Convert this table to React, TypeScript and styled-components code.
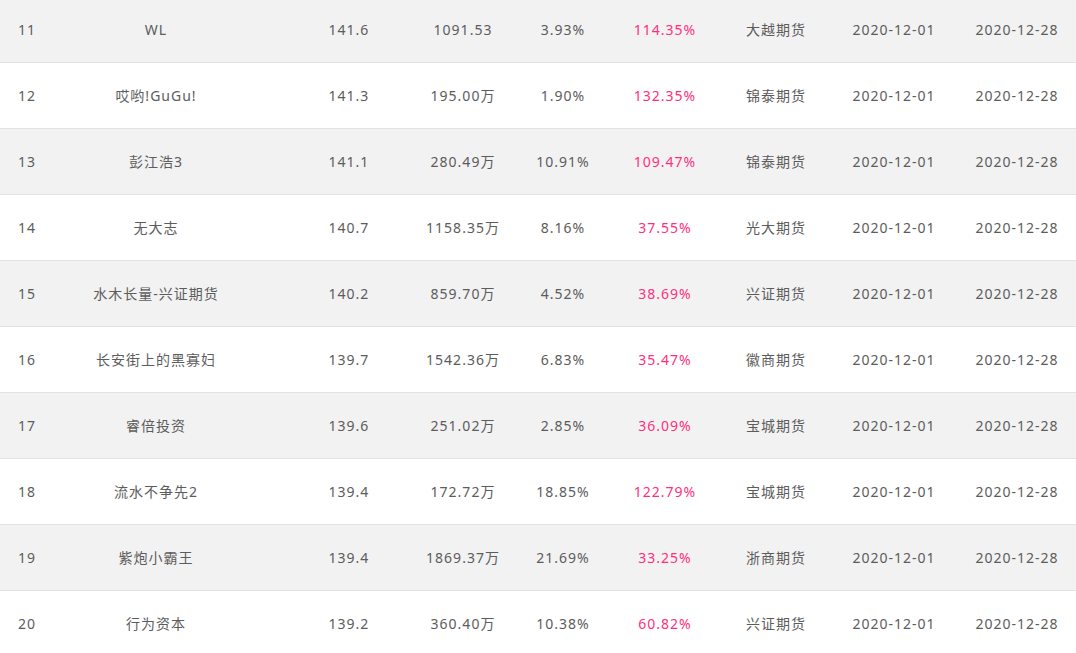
import React from "react";
import styled, { createGlobalStyle } from "styled-components";

const GlobalStyle = createGlobalStyle`
  html, body {
    margin: 0;
    padding: 0;
    background: #ffffff;
    overflow: hidden;
  }
  body {
    font-family: "Noto Sans", "Noto Sans CJK SC", sans-serif;
  }
`;

type Rank = {
  rank: number;
  name: string;
  score: string;
  equity: string;
  drawdown: string;
  profit: string;
  broker: string;
  start: string;
  end: string;
};

const rows: Rank[] = [
  { rank: 11, name: "WL", score: "141.6", equity: "1091.53", drawdown: "3.93%", profit: "114.35%", broker: "大越期货", start: "2020-12-01", end: "2020-12-28" },
  { rank: 12, name: "哎哟!GuGu!", score: "141.3", equity: "195.00万", drawdown: "1.90%", profit: "132.35%", broker: "锦泰期货", start: "2020-12-01", end: "2020-12-28" },
  { rank: 13, name: "彭江浩3", score: "141.1", equity: "280.49万", drawdown: "10.91%", profit: "109.47%", broker: "锦泰期货", start: "2020-12-01", end: "2020-12-28" },
  { rank: 14, name: "无大志", score: "140.7", equity: "1158.35万", drawdown: "8.16%", profit: "37.55%", broker: "光大期货", start: "2020-12-01", end: "2020-12-28" },
  { rank: 15, name: "水木长量-兴证期货", score: "140.2", equity: "859.70万", drawdown: "4.52%", profit: "38.69%", broker: "兴证期货", start: "2020-12-01", end: "2020-12-28" },
  { rank: 16, name: "长安街上的黑寡妇", score: "139.7", equity: "1542.36万", drawdown: "6.83%", profit: "35.47%", broker: "徽商期货", start: "2020-12-01", end: "2020-12-28" },
  { rank: 17, name: "睿倍投资", score: "139.6", equity: "251.02万", drawdown: "2.85%", profit: "36.09%", broker: "宝城期货", start: "2020-12-01", end: "2020-12-28" },
  { rank: 18, name: "流水不争先2", score: "139.4", equity: "172.72万", drawdown: "18.85%", profit: "122.79%", broker: "宝城期货", start: "2020-12-01", end: "2020-12-28" },
  { rank: 19, name: "紫炮小霸王", score: "139.4", equity: "1869.37万", drawdown: "21.69%", profit: "33.25%", broker: "浙商期货", start: "2020-12-01", end: "2020-12-28" },
  { rank: 20, name: "行为资本", score: "139.2", equity: "360.40万", drawdown: "10.38%", profit: "60.82%", broker: "兴证期货", start: "2020-12-01", end: "2020-12-28" },
];

const Table = styled.div`
  width: 1076px;
  margin-top: -3px;
  display: flex;
  flex-direction: column;
`;

const Row = styled.div<{ $shaded: boolean }>`
  display: grid;
  grid-template-columns: 54px 236px 118px 110px 90px 114px 108px 128px 118px;
  height: 65px;
  align-items: center;
  background: ${(p) => (p.$shaded ? "#f2f2f2" : "#ffffff")};
  border-bottom: 1px solid #e2e2ea;
`;

const Cell = styled.div<{ $accent?: boolean }>`
  text-align: center;
  font-size: 14px;
  line-height: 20px;
  height: 20px;
  letter-spacing: 1px;
  white-space: nowrap;
  color: ${(p) => (p.$accent ? "#ff2f7e" : "#5c5c5c")};
`;

const NameCell = styled(Cell)`
  padding-right: 32px;
`;

export default function App() {
  return (
    <>
      <GlobalStyle />
      <Table>
        {rows.map((r, i) => (
          <Row key={r.rank} $shaded={i % 2 === 0}>
            <Cell>{r.rank}</Cell>
            <NameCell>{r.name}</NameCell>
            <Cell>{r.score}</Cell>
            <Cell>{r.equity}</Cell>
            <Cell>{r.drawdown}</Cell>
            <Cell $accent>{r.profit}</Cell>
            <Cell>{r.broker}</Cell>
            <Cell>{r.start}</Cell>
            <Cell>{r.end}</Cell>
          </Row>
        ))}
      </Table>
    </>
  );
}
